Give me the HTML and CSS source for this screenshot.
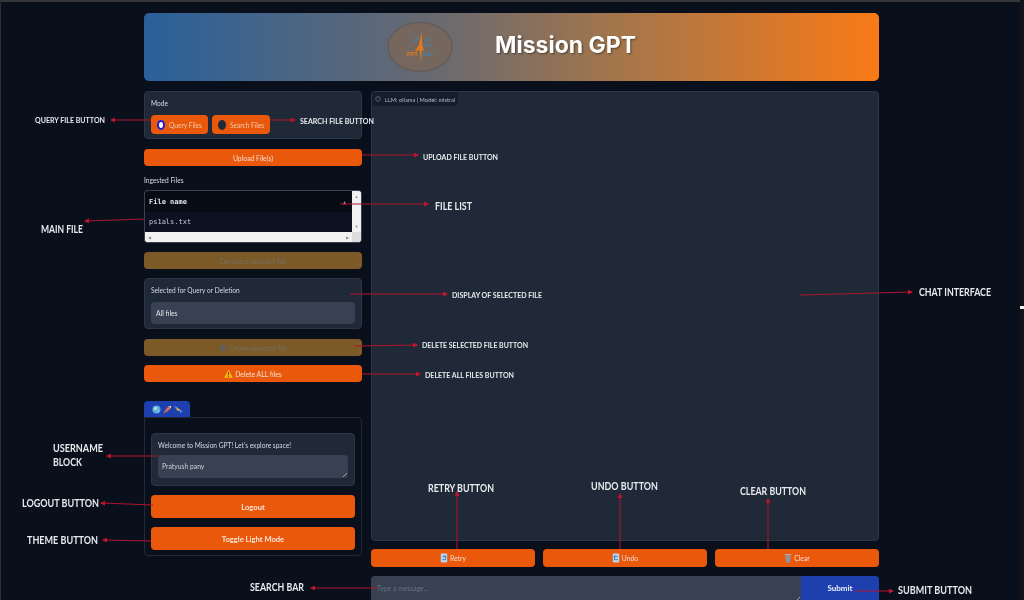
FILE: index.html
```html
<!DOCTYPE html>
<html lang="en">
<head>
<meta charset="utf-8">
<title>Mission GPT</title>
<link rel="stylesheet" href="styles.css">
</head>
<body>
<div class="screen">
  <div class="app">
    <header class="banner">
      <svg class="logo" viewBox="0 0 68 52" aria-hidden="true">
        <ellipse cx="34" cy="26" rx="32" ry="24.500" class="logo-disc"/>
        <path d="M35.500 11 L33 24 L29 30 L33.500 29 L35 41 L35.800 29 L38 30 L36.300 24 Z" class="logo-rocket"/>
        <path d="M26 18 L31 21 M29 14 L32 19 M39 21 L45 17 M39 24 L46 24" class="logo-rays"/>
        <text x="26" y="35" class="logo-hi" text-anchor="middle">इसरो</text>
        <text x="42" y="35" class="logo-en" text-anchor="middle">isro</text>
      </svg>
      <h1 class="title">Mission GPT</h1>
    </header>
    <div class="columns">
      <aside class="left">
        <section class="panel mode">
          <div class="label">Mode</div>
          <div class="radios">
            <div class="radio"><span class="dot dot-on"></span>Query Files</div>
            <div class="radio"><span class="dot"></span>Search Files</div>
          </div>
        </section>
        <button class="btn upload">Upload File(s)</button>
        <div class="plain-label">Ingested Files</div>
        <div class="table">
          <div class="table-main">
            <div class="thead"><span>File name</span><span class="sort">▲</span></div>
            <div class="tbody">ps1als.txt</div>
          </div>
          <div class="vbar"><span class="sc">▲</span><span class="sc">▼</span></div>
          <div class="hbar"><span class="sc">◀</span><span class="sc">▶</span></div>
          <div class="corner"></div>
        </div>
        <button class="btn muted deselect">De-select selected file</button>
        <section class="panel selected">
          <div class="label">Selected for Query or Deletion</div>
          <div class="field">All files</div>
        </section>
        <button class="btn muted delsel">
          <svg class="ico" viewBox="0 0 12 12" aria-hidden="true"><path d="M2.500 3 H9.500 L8.800 11 H3.200 Z" class="trash-dim"/><rect x="2" y="1" width="8" height="1.500" class="trash-dim"/></svg>
          Delete selected file</button>
        <button class="btn delall">
          <svg class="ico" viewBox="0 0 12 12" aria-hidden="true"><path d="M6 .5 L11.800 11.500 H.2 Z" class="warn"/><path d="M6 4 V8 M6 9 V10.500" class="warn-mark"/></svg>
          Delete ALL files</button>
        <div class="tab">
          <svg class="tab-ico" viewBox="0 0 10 10" aria-hidden="true"><circle cx="5" cy="5" r="4.500" class="globe"/><path d="M2 3 L5 2 L6 4 L4 6 L2 5 Z M6 6 L8 5.500 L7 8 Z" class="land"/></svg>
          <svg class="tab-ico" viewBox="0 0 10 10" aria-hidden="true"><path d="M9 1 L6 1.500 L2 6.500 L3.500 8 L8.500 4 Z" class="rocket-body"/><path d="M9 1 L6.800 1.400 L8.600 3.200 Z" class="rocket-tip"/><path d="M2 7 L.5 9.500 L3 8 Z" class="rocket-fire"/></svg>
          <svg class="tab-ico" viewBox="0 0 10 10" aria-hidden="true"><path d="M.5 1.500 L4 2.500 L2.500 5 Z M6 5 L9.500 7 L7 9 Z" class="sat-wing"/><path d="M3.500 3 L7 5 L5 7 L2.500 5 Z" class="sat-body"/></svg>
        </div>
        <section class="tabpanel">
          <div class="panel welcome">
            <div class="label">Welcome to Mission GPT! Let's explore space!</div>
            <div class="namebox">Pratyush pany<span class="grip"></span></div>
          </div>
          <button class="btn big">Logout</button>
          <button class="btn big">Toggle Light Mode</button>
        </section>
      </aside>
      <main class="right">
        <section class="chat">
          <div class="chip">
            <svg class="chip-ico" viewBox="0 0 10 10" aria-hidden="true"><path d="M5 1 L8.500 2.500 V5.500 C8.500 7.500 6.500 8.500 5 9 C3.500 8.500 1.500 7.500 1.500 5.500 V2.500 Z"/></svg>
            LLM: ollama | Model: mistral
          </div>
        </section>
        <div class="actions">
          <button class="btn act">
            <svg class="ico" viewBox="0 0 10 12" aria-hidden="true"><rect x="1" y="0.500" width="8" height="11" rx="1" class="doc"/><path d="M3 4 H7 V8 H3 M6 3 L7.500 4 L6 5" class="doc-mark"/></svg>
            Retry</button>
          <button class="btn act">
            <svg class="ico" viewBox="0 0 10 12" aria-hidden="true"><rect x="1" y="0.500" width="8" height="11" rx="1" class="doc"/><path d="M7 4 H3 V8 H7 M4 3 L2.500 4 L4 5" class="doc-mark"/></svg>
            Undo</button>
          <button class="btn act">
            <svg class="ico" viewBox="0 0 10 12" aria-hidden="true"><path d="M1.500 3 H8.500 L7.500 11.500 H2.500 Z" class="bin"/><rect x="1" y="1" width="8" height="1.500" class="bin-lid"/></svg>
            Clear</button>
        </div>
        <div class="composer">
          <div class="prompt">Type a message...<span class="grip"></span></div>
          <button class="submit">Submit</button>
        </div>
      </main>
    </div>
  </div>

  <svg class="notes" viewBox="0 0 1024 600" aria-label="Annotations">
    <defs>
      <marker id="head" markerWidth="5" markerHeight="5" refX="4" refY="2.500" orient="auto" markerUnits="userSpaceOnUse">
        <path d="M0 0 L5 2.500 L0 5 Z" class="head"/>
      </marker>
    </defs>
    <g class="arrows">
      <path d="M151 120 H111"/>
      <path d="M270 120 H295"/>
      <path d="M362 155 H418"/>
      <path d="M340 204 H428"/>
      <path d="M144 219 L85 221"/>
      <path d="M350 294 H447"/>
      <path d="M800 295 L912 292"/>
      <path d="M355 346 L417 345"/>
      <path d="M362 374 H420"/>
      <path d="M158 456 H107"/>
      <path d="M153 505 L101 503"/>
      <path d="M151 541 L103 540"/>
      <path d="M457 549 V492"/>
      <path d="M620 549 V494"/>
      <path d="M768 549 V499"/>
      <path d="M378 588 H311"/>
      <path d="M855 591 H893"/>
    </g>
    <g class="tag sm">
      <text x="35" y="123" textLength="70" lengthAdjust="spacingAndGlyphs">QUERY FILE BUTTON</text>
      <text x="300" y="124" textLength="74" lengthAdjust="spacingAndGlyphs">SEARCH FILE BUTTON</text>
      <text x="423" y="160" textLength="75" lengthAdjust="spacingAndGlyphs">UPLOAD FILE BUTTON</text>
      <text x="452" y="298" textLength="90" lengthAdjust="spacingAndGlyphs">DISPLAY OF SELECTED FILE</text>
      <text x="422" y="348" textLength="106" lengthAdjust="spacingAndGlyphs">DELETE SELECTED FILE BUTTON</text>
      <text x="425" y="378" textLength="89" lengthAdjust="spacingAndGlyphs">DELETE ALL FILES BUTTON</text>
    </g>
    <g class="tag lg">
      <text x="435" y="210" textLength="37" lengthAdjust="spacingAndGlyphs">FILE LIST</text>
      <text x="41" y="233" textLength="42" lengthAdjust="spacingAndGlyphs">MAIN FILE</text>
      <text x="919" y="296" textLength="72" lengthAdjust="spacingAndGlyphs">CHAT INTERFACE</text>
      <text x="53" y="452" textLength="50" lengthAdjust="spacingAndGlyphs">USERNAME</text>
      <text x="53" y="466" textLength="29" lengthAdjust="spacingAndGlyphs">BLOCK</text>
      <text x="22" y="507" textLength="77" lengthAdjust="spacingAndGlyphs">LOGOUT BUTTON</text>
      <text x="27" y="544" textLength="71" lengthAdjust="spacingAndGlyphs">THEME BUTTON</text>
      <text x="428" y="492" textLength="66" lengthAdjust="spacingAndGlyphs">RETRY BUTTON</text>
      <text x="591" y="490" textLength="67" lengthAdjust="spacingAndGlyphs">UNDO BUTTON</text>
      <text x="740" y="495" textLength="66" lengthAdjust="spacingAndGlyphs">CLEAR BUTTON</text>
      <text x="250" y="591" textLength="54" lengthAdjust="spacingAndGlyphs">SEARCH BAR</text>
      <text x="898" y="594" textLength="74" lengthAdjust="spacingAndGlyphs">SUBMIT BUTTON</text>
    </g>
  </svg>
  <div class="edge"><span class="edge-dot"></span></div>
</div>
</body>
</html>
```

FILE: styles.css
```css
* { box-sizing: border-box; }

html, body {
  margin: 0;
  height: 600px;
  overflow: hidden;
  background: #0a0f1c;
}

.screen {
  position: relative;
  width: 1024px;
  height: 600px;
  overflow: hidden;
  background: #0a0f1c;
  font-family: "Lato", "Noto Sans", sans-serif;
  color: #d6dae2;
  filter: blur(0.45px);
}

/* capture edges */
.screen::before {
  content: "";
  position: absolute;
  inset: 0;
  border-top: 2px solid #35363a;
  border-left: 1px solid #2c2d31;
}
.edge {
  position: absolute;
  top: 0;
  bottom: 0;
  right: 0;
  width: 4px;
  background: #11121a;
}
.edge-dot {
  position: absolute;
  top: 306px;
  left: 0;
  width: 4px;
  height: 3px;
  background: #f2f2f2;
}

.app { position: relative; padding: 13px 145px 0 144px; }

/* banner */
.banner {
  height: 68px;
  display: flex;
  align-items: center;
  padding-left: 242px;
  gap: 41px;
  border-radius: 5px;
  background: linear-gradient(90deg, #2a6099 0%, #6a6a70 40%, #a5764a 65%, #f97a16 100%);
}
.logo { width: 68px; height: 52px; flex: none; }
.logo-disc { fill: #75675d; stroke: #635c58; stroke-width: 1.500; }
.logo-rocket { fill: #e07a20; }
.logo-rays { stroke: #2a8fd8; stroke-width: .8; fill: none; }
.logo-hi { font-size: 6px; fill: #e8801f; font-family: "Noto Sans", sans-serif; }
.logo-en { font-size: 6px; fill: #2a8fd8; font-family: "Noto Sans", sans-serif; }
.title {
  margin: 0 0 4px;
  font-family: "Inter", "Liberation Sans", sans-serif;
  font-weight: 700;
  font-size: 23px;
  line-height: 30px;
  color: #fff;
  text-shadow: 1px 1px 2px rgba(0, 0, 0, .45);
}

.columns {
  display: flex;
  gap: 9px;
  margin-top: 10px;
  align-items: flex-start;
}
.left { width: 218px; flex: none; display: flex; flex-direction: column; }
.right { flex: 1; min-width: 0; }

/* generic */
.panel {
  background: #1f2937;
  border: 1px solid #2b3648;
  border-radius: 4px;
  padding: 7px 6px;
}
.label { font-size: 6.600px; line-height: 9px; color: #d6dae2; }
.plain-label { font-size: 6.600px; line-height: 10px; color: #d6dae2; margin-top: 9px; }

.btn {
  display: flex;
  align-items: center;
  justify-content: center;
  gap: 2px;
  width: 100%;
  height: 17px;
  padding: 0;
  border: 0;
  border-radius: 4px;
  background: #ea580c;
  color: #f3ddd0;
  font-family: inherit;
  font-size: 6.800px;
}
.muted { background: #7c5a28; color: #74705e; }
.ico { width: 8px; height: 10px; flex: none; }

/* mode */
.mode { height: 48px; }
.radios { display: flex; gap: 4px; margin-top: 7px; }
.radio {
  display: flex;
  align-items: center;
  gap: 4px;
  height: 19px;
  padding: 0 6px;
  background: #ea580c;
  border-radius: 4px;
  font-size: 6.600px;
  color: #f0c9ae;
}
.dot { width: 8px; height: 10px; border-radius: 50%; background: #1f2937; flex: none; }
.dot-on { background: #fff; border: 2.500px solid #1d1dd8; }

.upload { margin-top: 10px; }

/* table */
.table {
  margin-top: 5px;
  height: 53px;
  display: grid;
  grid-template-columns: 1fr 9px;
  grid-template-rows: 1fr 10px;
  border: 1px solid #374151;
  border-radius: 4px;
  overflow: hidden;
  background: #f1f1f1;
}
.table-main { background: #0b1120; display: flex; flex-direction: column; }
.thead {
  height: 21px;
  display: flex;
  align-items: center;
  justify-content: space-between;
  padding: 0 6px 0 4px;
  background: #070b16;
  font-family: "DejaVu Sans Mono", "Liberation Mono", monospace;
  font-size: 7px;
  font-weight: 700;
  color: #e5e7eb;
}
.sort { font-size: 5px; color: #9ca3af; }
.tbody {
  flex: 1;
  padding: 0 4px;
  display: flex;
  align-items: center;
  font-family: "DejaVu Sans Mono", "Liberation Mono", monospace;
  font-size: 7px;
  color: #c9ced6;
}
.vbar, .hbar {
  display: flex;
  justify-content: space-between;
  align-items: center;
  background: #f1f1f1;
}
.vbar { flex-direction: column; padding: 3px 0; }
.hbar { padding: 0 3px; }
.sc { font-size: 4px; line-height: 5px; color: #8a8a8a; }
.corner { background: #dcdcdc; }

.deselect { margin-top: 9px; }

/* selected */
.selected { margin-top: 9px; height: 51px; }
.field {
  margin-top: 7px;
  height: 22px;
  display: flex;
  align-items: center;
  padding: 0 5px;
  border-radius: 4px;
  background: #374151;
  font-size: 6.800px;
  color: #e2e5ea;
}
.delsel { margin-top: 10px; }
.delall { margin-top: 9px; }
.delall .ico { width: 9px; height: 11px; }
.trash-dim { fill: #5d6068; }
.warn { fill: #f5b50e; }
.warn-mark { stroke: #5b3a05; stroke-width: 1.200; fill: none; }

/* tab */
.tab {
  margin-top: 19px;
  width: 46px;
  height: 16px;
  display: flex;
  align-items: center;
  justify-content: center;
  gap: 2px;
  border-radius: 4px 4px 0 0;
  background: #1e40af;
}
.tab-ico { width: 9px; height: 9px; }
.globe { fill: #5aa9e6; }
.land { fill: #b9e0c0; }
.rocket-body { fill: #d9705a; }
.rocket-tip { fill: #e9edf2; }
.rocket-fire { fill: #f0a030; }
.sat-wing { fill: #6c9ac7; }
.sat-body { fill: #d4b04c; }

.tabpanel {
  height: 139px;
  padding: 15px 6px 0;
  border: 1px solid #1f2937;
  border-radius: 0 4px 4px 4px;
}
.welcome { height: 53px; padding: 7px 6px 0; }
.namebox {
  position: relative;
  margin: 5px 0 0 0;
  height: 23px;
  padding: 7px 4px 0;
  border-radius: 4px;
  background: #374151;
  font-size: 6.800px;
  line-height: 9px;
  color: #cfd3da;
}
.grip {
  position: absolute;
  right: 1px;
  bottom: 1px;
  width: 4px;
  height: 4px;
  background: linear-gradient(135deg, transparent 50%, #9ca3af 50%, #9ca3af 60%, transparent 60%);
}
.big {
  height: 23px;
  font-size: 7.600px;
  font-weight: 700;
  color: #f8e6da;
  margin-top: 9px;
}

/* chat */
.chat {
  height: 450px;
  background: #1f2937;
  border: 1px solid #2b3648;
  border-radius: 4px;
}
.chip {
  display: flex;
  width: fit-content;
  align-items: center;
  gap: 4px;
  height: 14px;
  padding: 0 3px;
  background: #161e2d;
  border-radius: 3px 0 4px 0;
  font-size: 5.700px;
  color: #b5bac4;
}
.chip-ico { width: 6px; height: 6px; fill: none; stroke: #8a919c; stroke-width: 1; }

.actions { display: flex; gap: 8px; margin-top: 8px; }
.act { flex: 1; height: 18px; }
.doc { fill: #b9d4ef; }
.doc-mark { stroke: #2f7fd0; stroke-width: 1.200; fill: none; }
.bin { fill: #8e9499; }
.bin-lid { fill: #a8aeb3; }

.composer { display: flex; margin-top: 9px; height: 36px; border-radius: 4px; overflow: hidden; }
.prompt {
  position: relative;
  flex: 1;
  background: #374151;
  padding: 8px 6px;
  font-size: 6.800px;
  line-height: 9px;
  color: #6b7280;
}
.prompt .grip { bottom: 11px; }
.submit {
  width: 78px;
  flex: none;
  align-self: stretch;
  border: 0;
  padding: 0 0 12px;
  background: #1e40af;
  color: #eef1fa;
  font-family: inherit;
  font-size: 8px;
  font-weight: 700;
}

/* annotations over the UI */
.notes {
  position: absolute;
  inset: 0;
  width: 1024px;
  height: 600px;
}
.arrows path { stroke: #b0142c; stroke-width: 1; fill: none; marker-end: url(#head); }
.head { fill: #c0142c; }
.tag { font-family: "Lato", "Open Sans", sans-serif; font-weight: 700; fill: #e8eaee; }
.sm { font-size: 8px; }
.lg { font-size: 10.500px; }
```
